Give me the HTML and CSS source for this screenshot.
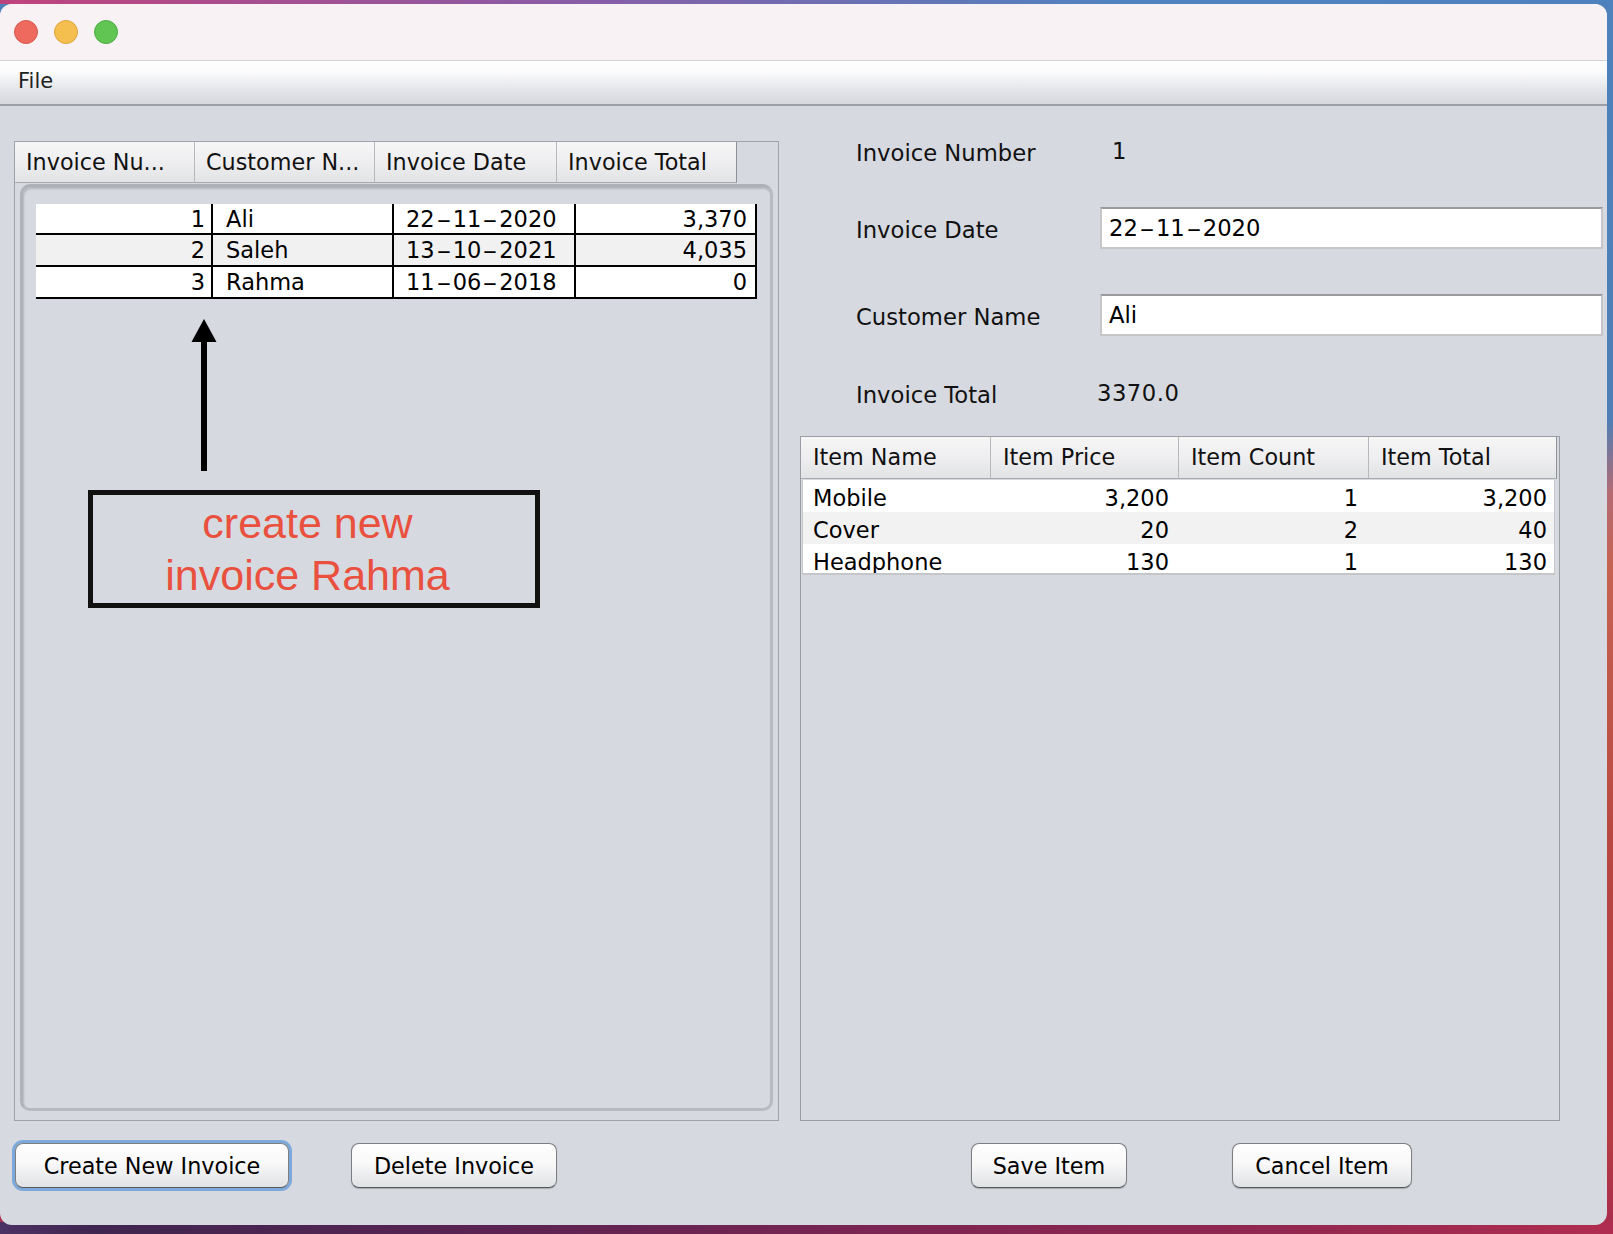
FILE: index.html
```html
<!DOCTYPE html>
<html>
<head>
<meta charset="utf-8">
<title>Invoice Generator</title>
<link rel="stylesheet" href="styles.css">
</head>
<body>
<div class="window">
  <div class="titlebar">
    <span class="light red"></span>
    <span class="light yellow"></span>
    <span class="light green"></span>
  </div>
  <div class="menubar"><span class="menu-item">File</span></div>
  <div class="content">
    <div class="left">
      <div class="invoice-panel">
        <div class="inv-head">
          <div class="hcell c1">Invoice Nu...</div>
          <div class="hcell c2">Customer N...</div>
          <div class="hcell c3">Invoice Date</div>
          <div class="hcell c4 last">Invoice Total</div>
        </div>
        <div class="scroll">
          <div class="inv-table">
            <div class="irow">
              <div class="icell c1 num">1</div>
              <div class="icell c2">Ali</div>
              <div class="icell c3">22<span class="dash">-</span>11<span class="dash">-</span>2020</div>
              <div class="icell c4 num">3,370</div>
            </div>
            <div class="irow alt">
              <div class="icell c1 num">2</div>
              <div class="icell c2">Saleh</div>
              <div class="icell c3">13<span class="dash">-</span>10<span class="dash">-</span>2021</div>
              <div class="icell c4 num">4,035</div>
            </div>
            <div class="irow">
              <div class="icell c1 num">3</div>
              <div class="icell c2">Rahma</div>
              <div class="icell c3">11<span class="dash">-</span>06<span class="dash">-</span>2018</div>
              <div class="icell c4 num">0</div>
            </div>
          </div>
        </div>
      </div>
      <div class="btn-row left-btns">
        <button class="btn focused create">Create New Invoice</button>
        <button class="btn delete">Delete Invoice</button>
      </div>
    </div>
    <div class="right">
      <div class="form">
        <div class="frow r1"><span class="flabel">Invoice Number</span><span class="fvalue num-one">1</span></div>
        <div class="frow r2"><span class="flabel">Invoice Date</span><div class="field">22<span class="dash">-</span>11<span class="dash">-</span>2020</div></div>
        <div class="frow r3"><span class="flabel">Customer Name</span><div class="field">Ali</div></div>
        <div class="frow r4"><span class="flabel">Invoice Total</span><span class="fvalue total">3370.0</span></div>
      </div>
      <div class="items-panel">
        <div class="items-head">
          <div class="ihcell k1">Item Name</div>
          <div class="ihcell k2">Item Price</div>
          <div class="ihcell k3">Item Count</div>
          <div class="ihcell k4 last">Item Total</div>
        </div>
        <div class="items-body">
          <div class="krow">
            <div class="kcell k1">Mobile</div>
            <div class="kcell k2 num">3,200</div>
            <div class="kcell k3 num">1</div>
            <div class="kcell k4 num">3,200</div>
          </div>
          <div class="krow alt">
            <div class="kcell k1">Cover</div>
            <div class="kcell k2 num">20</div>
            <div class="kcell k3 num">2</div>
            <div class="kcell k4 num">40</div>
          </div>
          <div class="krow">
            <div class="kcell k1">Headphone</div>
            <div class="kcell k2 num">130</div>
            <div class="kcell k3 num">1</div>
            <div class="kcell k4 num">130</div>
          </div>
        </div>
      </div>
      <div class="btn-row right-btns">
        <button class="btn save">Save Item</button>
        <button class="btn cancel">Cancel Item</button>
      </div>
    </div>
  </div>
  <svg class="arrow" width="30" height="160" viewBox="0 0 30 160" aria-hidden="true">
    <polygon points="14,4 26.5,27 1.5,27" fill="#000"/>
    <rect x="11" y="25" width="6" height="131" fill="#000"/>
  </svg>
  <div class="note">create new<br>invoice Rahma</div>
</div>
</body>
</html>
```

FILE: styles.css
```css
html, body {
  margin: 0;
  padding: 0;
}
body {
  width: 1613px;
  height: 1234px;
  overflow: hidden;
  background-color: #b8403f;
  background-image:
    linear-gradient(to right, #bf437c 0%, #8a5ca6 35%, #4f84c0 70%, #4d82bf 100%),
    linear-gradient(to right, #4b3264 0%, #3f2650 6%, #5a2352 30%, #7c2552 55%, #92284f 80%, #b02d50 100%),
    linear-gradient(to bottom, #4d82bd 0%, #4f7fb6 34%, #b46a72 40%, #c66352 46%, #b84540 70%, #b53c42 92%, #a82c4f 100%);
  background-size: 100% 4px, 100% 12px, 100% 100%;
  background-position: top left, bottom left, top left;
  background-repeat: no-repeat;
  font-family: "DejaVu Sans", "Liberation Sans", sans-serif;
  color: #111;
}

.window {
  position: relative;
  margin-top: 4px;
  width: 1607px;
  height: 1221px;
  border-radius: 12px;
  background: #d6d9df;
  overflow: hidden;
  display: flex;
  flex-direction: column;
}

/* title bar */
.titlebar {
  height: 56px;
  flex: none;
  background: #f8f2f4;
  border-bottom: 1px solid #d3d3d6;
  display: flex;
  align-items: center;
  padding-left: 14px;
  gap: 16px;
}
.light {
  width: 22px;
  height: 22px;
  border-radius: 50%;
  box-sizing: content-box;
}
.light.red { background: #ee6a5f; border: 1px solid #d65a50; }
.light.yellow { background: #f5bf4f; border: 1px solid #dba43c; }
.light.green { background: #61c554; border: 1px solid #4fab44; }

/* menu bar */
.menubar {
  height: 43px;
  flex: none;
  background: linear-gradient(to bottom, #ffffff 0%, #fbfbfc 25%, #e4e6ea 65%, #d6d8de 100%);
  border-bottom: 2px solid #9b9ea6;
  display: flex;
  align-items: center;
  padding-left: 18px;
}
.menu-item {
  font-size: 21px;
  color: #222;
  line-height: 1;
  padding-bottom: 2px;
}

/* content */
.content {
  flex: 1;
  display: flex;
}
.left {
  width: 765px;
  padding-left: 14px;
  padding-top: 35px;
  flex: none;
}
.right {
  width: 807px;
  margin-left: 21px;
  flex: none;
}

.dash {
  display: inline-block;
  width: 18px;
  text-align: center;
  transform: scaleX(1.9);
}

/* invoice panel */
.invoice-panel {
  width: 765px;
  height: 980px;
  box-sizing: border-box;
  border: 1px solid #9fa2a8;
}
.inv-head {
  display: flex;
  height: 41px;
}
.hcell, .ihcell {
  box-sizing: border-box;
  height: 100%;
  background: linear-gradient(to bottom, #f6f6f7 0%, #eeeef0 50%, #e2e3e6 100%);
  border-right: 1px solid #b6b8bd;
  border-bottom: 1px solid #a9abb0;
  font-size: 22.3px;
  line-height: 40px;
  padding-left: 11px;
  white-space: nowrap;
  overflow: hidden;
  color: #111;
}
.hcell.last, .ihcell.last { border-right: 1px solid #8f9197; }
.hcell.c1 { width: 180px; }
.hcell.c2 { width: 180px; }
.hcell.c3 { width: 182px; }
.hcell.c4 { width: 180px; }

.scroll {
  margin: 1px 0 0 5px;
  width: 753px;
  height: 927px;
  box-sizing: border-box;
  border: 3px solid #b8bac0;
  border-top-color: #aeb0b5;
  border-left-color: #b0b2b7;
  border-radius: 10px;
  box-shadow: inset 1px 2px 2px rgba(0, 0, 0, 0.16);
  padding: 17px 0 0 13px;
}
.inv-table {
  width: 721px;
}
.irow {
  display: flex;
  height: 32px;
  box-sizing: border-box;
  border-bottom: 2px solid #000;
  background: #ffffff;
}
.irow:first-child { height: 31px; }
.irow.alt { background: #f1f1f1; }
.icell {
  box-sizing: border-box;
  border-right: 2px solid #000;
  font-size: 22.5px;
  line-height: 31px;
  white-space: nowrap;
  color: #000;
}
.irow:first-child .icell { line-height: 30px; }
.icell.c1 { width: 177px; text-align: right; padding-right: 6px; }
.icell.c2 { width: 181px; padding-left: 13px; }
.icell.c3 { width: 182px; padding-left: 12px; }
.icell.c4 { width: 181px; text-align: right; padding-right: 8px; }

/* buttons */
.btn-row {
  display: flex;
  margin-top: 22px;
  height: 45px;
}
.btn {
  height: 45px;
  box-sizing: border-box;
  border: 1px solid #7d7e82;
  border-bottom-color: #56575b;
  border-radius: 8px;
  background: linear-gradient(to bottom, #ffffff 0%, #f8f8f9 45%, #ebecee 75%, #e1e2e5 100%);
  box-shadow: 0 1px 1px rgba(0, 0, 0, 0.22);
  font-family: "DejaVu Sans", "Liberation Sans", sans-serif;
  font-size: 22.3px;
  color: #000;
  padding: 0;
  line-height: 42px;
}
.btn.focused {
  box-shadow: 0 0 0 3px #7ca8da, 0 1px 1px rgba(0, 0, 0, 0.2);
}
.btn.create { width: 274px; margin-left: 1px; }
.btn.delete { width: 206px; margin-left: 62px; }
.btn.save { width: 156px; margin-left: 171px; }
.btn.cancel { width: 180px; margin-left: 105px; }

/* form */
.form {
  padding-top: 24px;
}
.frow {
  display: flex;
  align-items: center;
  height: 42px;
}
.frow.r2 { margin-top: 35px; }
.frow.r3 { margin-top: 45px; }
.frow.r4 { margin-top: 36px; }
.flabel {
  width: 244px;
  padding-left: 56px;
  padding-top: 3px;
  flex: none;
  font-size: 22.7px;
  color: #111;
  white-space: nowrap;
}
.fvalue {
  font-size: 22.7px;
  color: #111;
}
.fvalue.num-one { padding-left: 12px; }
.fvalue.total { margin-left: -3px; letter-spacing: 0.5px; }
.field {
  width: 503px;
  height: 42px;
  box-sizing: border-box;
  background: #fff;
  border: 2px solid #c6c6c8;
  border-top-color: #9a9a9c;
  padding-left: 7px;
  font-size: 22.7px;
  line-height: 39px;
  color: #000;
}

/* items panel */
.items-panel {
  margin-top: 22px;
  width: 760px;
  height: 685px;
  box-sizing: border-box;
  border: 1px solid #9a9da4;
}
.items-head {
  display: flex;
  height: 42px;
}
.ihcell { line-height: 41px; padding-left: 12px; }
.ihcell.k1 { width: 190px; }
.ihcell.k2 { width: 188px; }
.ihcell.k3 { width: 190px; }
.ihcell.k4 { width: 188px; }
.items-body {
  margin-left: 1px;
  margin-top: 1px;
  width: 753px;
  height: 95px;
  box-sizing: border-box;
  border-left: 1px solid #c6c8cc;
  border-right: 1px solid #c6c8cc;
  border-bottom: 2px solid #c4c6ca;
  overflow: hidden;
  background: #fff;
}
.krow {
  display: flex;
  height: 32px;
  background: #fff;
}
.krow.alt { background: #f2f2f2; }
.kcell {
  box-sizing: border-box;
  font-size: 22.5px;
  line-height: 32px;
  padding-top: 2px;
  white-space: nowrap;
  color: #000;
}
.kcell.k1 { width: 188px; padding-left: 10px; }
.kcell.k2 { width: 188px; text-align: right; padding-right: 10px; }
.kcell.k3 { width: 190px; text-align: right; padding-right: 11px; }
.kcell.k4 { width: 185px; text-align: right; padding-right: 7px; }

/* annotation overlay */
.arrow {
  position: absolute;
  left: 190px;
  top: 311px;
}
.note {
  position: absolute;
  left: 88px;
  top: 486px;
  width: 452px;
  height: 118px;
  box-sizing: border-box;
  border: 5px solid #111;
  padding-top: 2px;
  padding-right: 13px;
  text-align: center;
  font-family: "Liberation Sans", Arial, sans-serif;
  font-size: 43px;
  line-height: 52px;
  color: #e9503e;
}
```
